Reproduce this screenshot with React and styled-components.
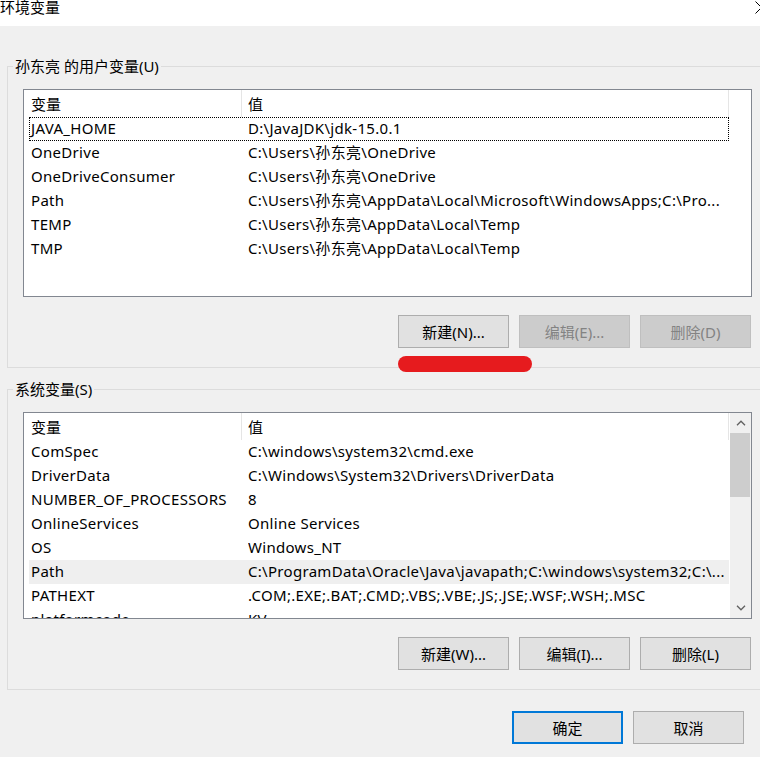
import React from 'react';
import styled, { createGlobalStyle, css } from 'styled-components';

const Global = createGlobalStyle`
  html, body { margin: 0; padding: 0; background: #f0f0f0; }
  body {
    font-family: "Noto Sans", "Noto Sans CJK SC", sans-serif;
    font-size: 15px;
    color: #000;
    overflow: hidden;
  }
  * { box-sizing: border-box; }
`;

const Window = styled.div`
  position: relative;
  width: 760px;
  height: 757px;
  overflow: hidden;
  background: #f0f0f0;
  display: flex;
  flex-direction: column;
`;

const TitleBar = styled.div`
  flex: none;
  height: 26px;
  background: #fff;
  display: flex;
  justify-content: space-between;
  align-items: flex-start;
`;

const Title = styled.div`
  font-size: 15px;
  line-height: 14px;
  white-space: nowrap;
`;

const CloseGlyph = styled.svg`
  flex: none;
  margin-right: -8px;
  margin-top: 1px;
`;

const Body = styled.div`
  display: flex;
  flex-direction: column;
  padding-top: 31px;
`;

const Group = styled.fieldset`
  margin: 0 -8px 0 7px;
  padding: 0;
  min-width: 0;
  border: 1px solid #dcdcdc;
  & + & { margin-top: 12px; }
`;

const Legend = styled.legend`
  margin-left: 5px;
  padding: 0 2px;
  font-size: 15px;
  line-height: 18px;
  white-space: pre;
`;

const GroupContent = styled.div`
  padding: 14px 15px 19px;
`;

const ListBox = styled.div`
  height: ${(p) => p.$height}px;
  border: 1px solid #828790;
  background: #fff;
  display: flex;
  overflow: hidden;
`;

const ListMain = styled.div`
  flex: 1;
  min-width: 0;
  display: flex;
  flex-direction: column;
  overflow: hidden;
`;

const Header = styled.div`
  flex: none;
  height: 27px;
  display: flex;
`;

const HeaderCell = styled.div`
  flex: none;
  width: ${(p) => p.$w}px;
  padding: 2px 0 0 ${(p) => p.$pad}px;
  line-height: 24px;
  border-right: 1px solid #e5e5e5;
  white-space: nowrap;
`;

const Row = styled.div`
  flex: none;
  margin-left: 5px;
  width: 700px;
  height: 24px;
  line-height: 22px;
  display: grid;
  grid-template-columns: 219px 1fr;
  background: ${(p) => (p.$hover ? '#efefef' : 'transparent')};
  ${(p) =>
    p.$focused &&
    css`
      outline: 1px dotted #000;
      outline-offset: -1px;
    `}
`;

const Cell = styled.div`
  white-space: nowrap;
  overflow: hidden;
  letter-spacing: 0.3px;
  padding-left: ${(p) => p.$pad || 0}px;
`;

const Scrollbar = styled.div`
  flex: none;
  width: 21px;
  background: #f0f0f0;
  display: flex;
  flex-direction: column;
`;

const ScrollArrow = styled.div`
  flex: none;
  height: 20px;
  display: flex;
  align-items: center;
  justify-content: center;
`;

const Thumb = styled.div`
  flex: none;
  height: 64px;
  margin-right: 1px;
  background: #cdcdcd;
`;

const Track = styled.div`
  flex: 1;
`;

const ButtonRow = styled.div`
  display: flex;
  justify-content: flex-end;
  gap: 10px;
  margin: 18px 1px 0 0;
`;

const Button = styled.button`
  flex: none;
  width: 111px;
  height: 33px;
  padding: 0;
  font-family: inherit;
  font-size: 15px;
  line-height: 20px;
  color: #000;
  background: #e1e1e1;
  border: 1px solid #adadad;
  border-radius: 0;
  ${(p) =>
    p.disabled &&
    css`
      color: #838383;
      background: #cccccc;
      border-color: #bfbfbf;
    `}
  ${(p) =>
    p.$default &&
    css`
      border: 2px solid #0078d7;
    `}
`;

const Footer = styled.div`
  display: flex;
  justify-content: flex-end;
  gap: 10px;
  margin: 21px 16px 0 0;
`;

const RedMark = styled.div`
  position: absolute;
  left: 398px;
  top: 356px;
  width: 134px;
  height: 16px;
  border-radius: 8px;
  background: #e61b1e;
`;

const Chevron = ({ up }) => (
  <svg width="10" height="6" viewBox="0 0 10 6">
    <polyline
      points={up ? '1,5.2 5,1.2 9,5.2' : '1,0.8 5,4.8 9,0.8'}
      fill="none"
      stroke="#606060"
      strokeWidth="1.3"
    />
  </svg>
);

const userVars = [
  ['JAVA_HOME', 'D:\\JavaJDK\\jdk-15.0.1', { focused: true }],
  ['OneDrive', 'C:\\Users\\孙东亮\\OneDrive'],
  ['OneDriveConsumer', 'C:\\Users\\孙东亮\\OneDrive'],
  ['Path', 'C:\\Users\\孙东亮\\AppData\\Local\\Microsoft\\WindowsApps;C:\\Pro...'],
  ['TEMP', 'C:\\Users\\孙东亮\\AppData\\Local\\Temp'],
  ['TMP', 'C:\\Users\\孙东亮\\AppData\\Local\\Temp'],
];

const systemVars = [
  ['ComSpec', 'C:\\windows\\system32\\cmd.exe'],
  ['DriverData', 'C:\\Windows\\System32\\Drivers\\DriverData'],
  ['NUMBER_OF_PROCESSORS', '8'],
  ['OnlineServices', 'Online Services'],
  ['OS', 'Windows_NT'],
  ['Path', 'C:\\ProgramData\\Oracle\\Java\\javapath;C:\\windows\\system32;C:\\...', { hover: true }],
  ['PATHEXT', '.COM;.EXE;.BAT;.CMD;.VBS;.VBE;.JS;.JSE;.WSF;.WSH;.MSC'],
  ['platformcode', 'KV'],
];

const VarList = ({ rows, height, scroll }) => (
  <ListBox $height={height}>
    <ListMain>
      <Header>
        <HeaderCell $w={218} $pad={7}>变量</HeaderCell>
        <HeaderCell $w={487} $pad={6}>值</HeaderCell>
      </Header>
      {rows.map(([name, value, opts = {}], i) => (
        <Row key={i} $focused={opts.focused} $hover={opts.hover}>
          <Cell $pad={2}>{name}</Cell>
          <Cell>{value}</Cell>
        </Row>
      ))}
    </ListMain>
    {scroll && (
      <Scrollbar>
        <ScrollArrow><Chevron up /></ScrollArrow>
        <Thumb />
        <Track />
        <ScrollArrow><Chevron /></ScrollArrow>
      </Scrollbar>
    )}
  </ListBox>
);

export default function App() {
  return (
    <>
      <Global />
      <Window>
        <TitleBar>
          <Title>环境变量</Title>
          <CloseGlyph width="13" height="13" viewBox="0 0 13 13">
            <line x1="0.5" y1="0.5" x2="12.5" y2="12.5" stroke="#000" strokeWidth="1" />
            <line x1="0.5" y1="12.5" x2="12.5" y2="0.5" stroke="#000" strokeWidth="1" />
          </CloseGlyph>
        </TitleBar>
        <Body>
          <Group>
            <Legend>孙东亮 的用户变量(U)</Legend>
            <GroupContent>
              <VarList rows={userVars} height={208} />
              <ButtonRow>
                <Button>新建(N)...</Button>
                <Button disabled>编辑(E)...</Button>
                <Button disabled>删除(D)</Button>
              </ButtonRow>
            </GroupContent>
          </Group>
          <Group>
            <Legend>系统变量(S)</Legend>
            <GroupContent>
              <VarList rows={systemVars} height={207} scroll />
              <ButtonRow>
                <Button>新建(W)...</Button>
                <Button>编辑(I)...</Button>
                <Button>删除(L)</Button>
              </ButtonRow>
            </GroupContent>
          </Group>
          <Footer>
            <Button $default>确定</Button>
            <Button>取消</Button>
          </Footer>
        </Body>
        <RedMark />
      </Window>
    </>
  );
}
